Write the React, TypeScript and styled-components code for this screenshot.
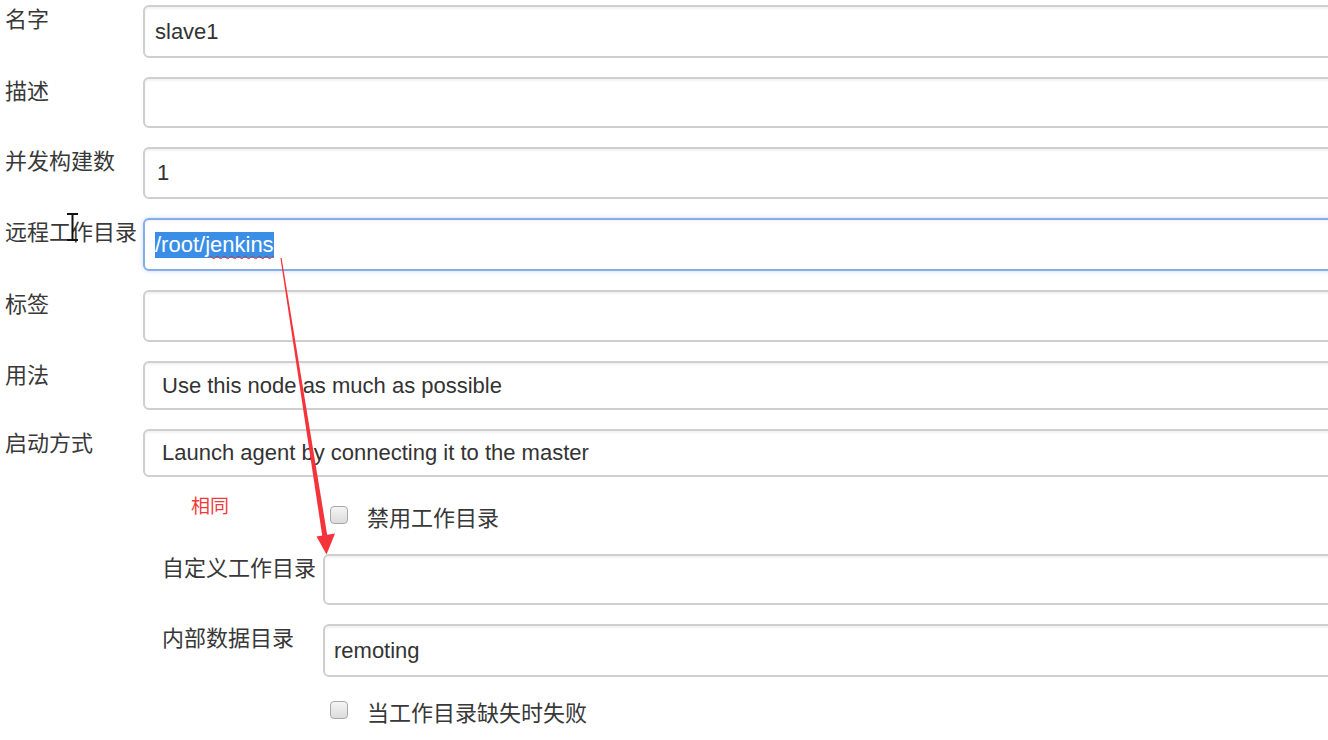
import React from "react";
import styled, { createGlobalStyle } from "styled-components";

const Global = createGlobalStyle`
  html, body {
    margin: 0;
    padding: 0;
    background: #ffffff;
  }
  body {
    font-family: "Liberation Sans", "Noto Sans CJK SC", sans-serif;
    color: #333333;
    overflow: hidden;
  }
`;

const Page = styled.div`
  position: relative;
  width: 1328px;
  height: 740px;
  overflow: hidden;
  background: #ffffff;
`;

const Form = styled.div`
  display: flex;
  flex-direction: column;
  gap: 19px;
  padding: 5px 0 0 5px;
  width: 1360px;
`;

const Row = styled.div`
  display: grid;
  grid-template-columns: 138px 1fr;
  align-items: start;
`;

const Label = styled.div`
  font-size: 22px;
  line-height: 30px;
  color: #383838;
  white-space: nowrap;
`;

const Control = styled.div<{ $h: number; $pad?: number; $focus?: boolean }>`
  box-sizing: border-box;
  height: ${(p) => p.$h}px;
  display: flex;
  align-items: center;
  padding-left: ${(p) => p.$pad ?? 10}px;
  border: 2px solid ${(p) => (p.$focus ? "#86aee6" : "#cfcfcf")};
  border-radius: 6px;
  background: #ffffff;
  box-shadow: ${(p) =>
    p.$focus
      ? "inset 0 1px 2px rgba(0,0,0,0.06), 0 0 5px rgba(102,150,230,0.35)"
      : "inset 0 2px 2px rgba(0,0,0,0.05)"};
  font-size: 22px;
  color: #333333;
  white-space: nowrap;
`;

const Selected = styled.span`
  background: #3a8ee6;
  color: #ffffff;
  line-height: 26px;
`;

const Misspelled = styled.span`
  text-decoration: underline wavy #d83030;
  text-decoration-thickness: 1px;
  text-underline-offset: 3px;
`;

const SubForm = styled.div`
  display: flex;
  flex-direction: column;
  gap: 19px;
  margin-top: 20px;
  padding-left: 162px;
  width: 1200px;
`;

const SubRow = styled.div`
  display: grid;
  grid-template-columns: 161px 1fr;
  align-items: start;
`;

const SubLabel = styled(Label)`
  line-height: 29px;
`;

const CheckRow = styled.div<{ $offset: number }>`
  display: grid;
  grid-template-columns: 161px auto 1fr;
  align-items: start;
  min-height: 38px;
  box-sizing: border-box;
  padding-top: ${(p) => p.$offset}px;
`;

const NoteCell = styled.div<{ $offset: number }>`
  margin-top: -${(p) => p.$offset}px;
`;

const Note = styled.div`
  padding-left: 29px;
  font-size: 19px;
  line-height: 20px;
  color: #f03a3a;
`;

const CheckBox = styled.div`
  box-sizing: border-box;
  width: 18px;
  height: 18px;
  margin-left: 7px;
  border: 1.5px solid #a8a8a8;
  border-radius: 4px;
  background: linear-gradient(#f4f4f4, #dcdcdc);
`;

const CheckText = styled.div`
  margin-left: 19px;
  font-size: 22px;
  line-height: 26px;
  color: #383838;
`;

const Overlay = styled.svg`
  position: absolute;
  left: 0;
  top: 0;
  width: 1328px;
  height: 740px;
  pointer-events: none;
`;

type FieldProps = {
  label: string;
  h: number;
  pad?: number;
  focus?: boolean;
  children?: React.ReactNode;
};

const Field = ({ label, h, pad, focus, children }: FieldProps) => (
  <Row>
    <Label>{label}</Label>
    <Control $h={h} $pad={pad} $focus={focus}>
      {children}
    </Control>
  </Row>
);

const SubField = ({ label, h, pad, children }: FieldProps) => (
  <SubRow>
    <SubLabel>{label}</SubLabel>
    <Control $h={h} $pad={pad}>
      {children}
    </Control>
  </SubRow>
);

export default function App() {
  return (
    <>
      <Global />
      <Page>
        <Form>
          <Field label="名字" h={53}>
            slave1
          </Field>
          <Field label="描述" h={51} />
          <Field label="并发构建数" h={52} pad={12}>
            1
          </Field>
          <Field label="远程工作目录" h={53} focus>
            <Selected>
              /root/<Misspelled>jenkins</Misspelled>
            </Selected>
          </Field>
          <Field label="标签" h={52} />
          <Field label="用法" h={49} pad={17}>
            Use this node as much as possible
          </Field>
          <Field label="启动方式" h={48} pad={17}>
            Launch agent by connecting it to the master
          </Field>
        </Form>
        <SubForm>
          <CheckRow $offset={9}>
            <NoteCell $offset={9}>
              <Note>相同</Note>
            </NoteCell>
            <CheckBox />
            <CheckText>禁用工作目录</CheckText>
          </CheckRow>
          <SubField label="自定义工作目录" h={51} />
          <SubField label="内部数据目录" h={53} pad={9}>
            remoting
          </SubField>
          <CheckRow $offset={5}>
            <div />
            <CheckBox />
            <CheckText>当工作目录缺失时失败</CheckText>
          </CheckRow>
        </SubForm>
        <Overlay viewBox="0 0 1328 740">
          <polygon
            points="280.4,258.1 281.6,257.9 327.6,537.4 322.6,538.2"
            fill="#f5333a"
          />
          <polygon points="316.5,536.5 335,533.5 326.5,554.5" fill="#f5333a" />
          <g stroke="#111111" strokeWidth="2" fill="none" strokeLinecap="square">
            <line x1="72.5" y1="215" x2="72.5" y2="239" />
            <line x1="68" y1="214" x2="77" y2="214" />
            <line x1="68" y1="240" x2="77" y2="240" />
          </g>
        </Overlay>
      </Page>
    </>
  );
}
